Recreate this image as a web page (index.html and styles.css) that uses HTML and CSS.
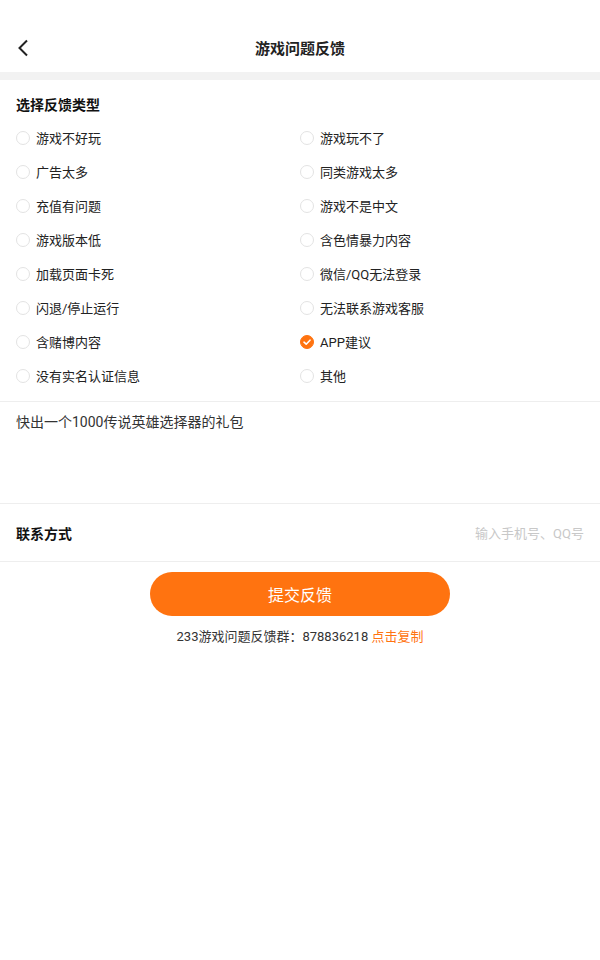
FILE: index.html
```html
<!DOCTYPE html>
<html lang="zh">
<head>
    <meta charset="UTF-8">
    <meta name="viewport" content="width=device-width, initial-scale=1.0">
    <title>游戏问题反馈</title>
    <link rel="stylesheet" href="styles.css">
</head>
<body>

<div class="header">
    <svg class="back" width="12" height="18" viewBox="0 0 12 18">
        <path d="M10 1.5 L2.5 9 L10 16.5" fill="none" stroke="#222" stroke-width="2"/>
    </svg>
    <h1>游戏问题反馈</h1>
</div>

<div class="band"></div>

<div class="section">
    <h2>选择反馈类型</h2>
    <div class="options">
        <label class="option"><span class="radio"></span>游戏不好玩</label>
        <label class="option"><span class="radio"></span>游戏玩不了</label>
        <label class="option"><span class="radio"></span>广告太多</label>
        <label class="option"><span class="radio"></span>同类游戏太多</label>
        <label class="option"><span class="radio"></span>充值有问题</label>
        <label class="option"><span class="radio"></span>游戏不是中文</label>
        <label class="option"><span class="radio"></span>游戏版本低</label>
        <label class="option"><span class="radio"></span>含色情暴力内容</label>
        <label class="option"><span class="radio"></span>加载页面卡死</label>
        <label class="option"><span class="radio"></span>微信/QQ无法登录</label>
        <label class="option"><span class="radio"></span>闪退/停止运行</label>
        <label class="option"><span class="radio"></span>无法联系游戏客服</label>
        <label class="option"><span class="radio"></span>含赌博内容</label>
        <label class="option"><span class="radio checked">
            <svg width="14" height="14" viewBox="0 0 14 14"><path d="M4 7.2 L6.2 9.2 L10 5.2" fill="none" stroke="#fff" stroke-width="1.6" stroke-linecap="round" stroke-linejoin="round"/></svg>
        </span>APP建议</label>
        <label class="option"><span class="radio"></span>没有实名认证信息</label>
        <label class="option"><span class="radio"></span>其他</label>
    </div>
</div>

<div class="message">快出一个1000传说英雄选择器的礼包</div>

<div class="contact">
    <span class="contact-label">联系方式</span>
    <span class="placeholder">输入手机号、QQ号</span>
</div>

<div class="actions">
    <button type="button" class="submit">提交反馈</button>
    <p class="group">233游戏问题反馈群：878836218 <span class="copy">点击复制</span></p>
</div>

</body>
</html>
```

FILE: styles.css
```css
body {
    margin: 0;
    padding: 0;
    background-color: #fff;
    font-family: Roboto, "Noto Sans CJK SC", sans-serif;
    color: #222;
}

.header {
    position: relative;
    height: 72px;
    display: flex;
    align-items: center;
    justify-content: center;
}

.header h1 {
    margin: 0;
    margin-top: 22px;
    font-size: 15px;
    font-weight: bold;
    color: #222;
}

.back {
    position: absolute;
    left: 17px;
    top: 39px;
}

.band {
    height: 8px;
    background-color: #f2f2f2;
}

.section {
    padding: 15px 16px 9px;
    border-bottom: 1px solid #eee;
}

.section h2 {
    margin: 0 0 5px;
    font-size: 14px;
    font-weight: bold;
    color: #111;
    line-height: 20px;
}

.options {
    display: grid;
    grid-template-columns: 284px 1fr;
}

.option {
    display: flex;
    align-items: center;
    height: 34px;
    font-size: 13px;
    color: #222;
}

.radio {
    width: 14px;
    height: 14px;
    margin-top: 1px;
    border: 1px solid #e3e3e3;
    border-radius: 50%;
    box-sizing: border-box;
    margin-right: 6px;
    display: flex;
}

.radio.checked {
    background-color: #ff7310;
    border-color: #ff7310;
}

.radio.checked svg {
    margin: -1px;
}

.message {
    height: 102px;
    padding: 11px 16px 0;
    box-sizing: border-box;
    font-size: 14px;
    color: #333;
    line-height: 18px;
    border-bottom: 1px solid #eee;
}

.contact {
    display: flex;
    justify-content: space-between;
    align-items: center;
    height: 57px;
    padding: 0 16px;
    border-bottom: 1px solid #eee;
}

.contact-label {
    font-size: 14px;
    font-weight: bold;
    color: #111;
}

.placeholder {
    font-size: 13px;
    color: #c8c8c8;
}

.actions {
    display: flex;
    flex-direction: column;
    align-items: center;
    padding-top: 10px;
}

.submit {
    width: 300px;
    height: 44px;
    border: none;
    border-radius: 22px;
    background-color: #ff7310;
    color: #fff;
    font-family: inherit;
    font-size: 16px;
    cursor: pointer;
}

.group {
    margin: 12px 0 0;
    font-size: 13px;
    color: #333;
    line-height: 18px;
}

.copy {
    color: #ff7310;
}
```
